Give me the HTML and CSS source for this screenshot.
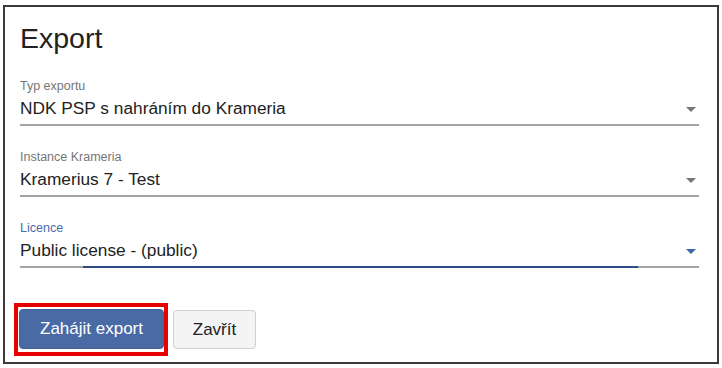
FILE: index.html
```html
<!DOCTYPE html>
<html>

<head>
    <title>Export</title>
    <link rel="stylesheet" href="styles.css">
</head>

<body>
    <div class="dialog">
        <h1 class="titulek">Export</h1>

        <div class="pole">
            <label class="popisek">Typ exportu</label>
            <div class="hodnota">
                <span class="text">NDK PSP s nahráním do Krameria</span>
                <svg class="sipka" width="10" height="5" viewBox="0 0 10 5"><path d="M0 0h10L5 5z"/></svg>
            </div>
        </div>

        <div class="pole">
            <label class="popisek">Instance Krameria</label>
            <div class="hodnota">
                <span class="text">Kramerius 7 - Test</span>
                <svg class="sipka" width="10" height="5" viewBox="0 0 10 5"><path d="M0 0h10L5 5z"/></svg>
            </div>
        </div>

        <div class="pole aktivni">
            <label class="popisek">Licence</label>
            <div class="hodnota">
                <span class="text">Public license - (public)</span>
                <svg class="sipka" width="10" height="5" viewBox="0 0 10 5"><path d="M0 0h10L5 5z"/></svg>
            </div>
            <div class="linka"></div>
        </div>

        <div class="akce">
            <div class="zvyrazneni">
                <button class="tlacitko hlavni">Zahájit export</button>
            </div>
            <button class="tlacitko zavrit">Zavřít</button>
        </div>
    </div>
</body>

</html>
```

FILE: styles.css
```css
body {
    margin: 0;
    background: #fff;
    font-family: "Liberation Sans", Arial, sans-serif;
    color: #222;
}

.dialog {
    box-sizing: border-box;
    margin: 5px 0 0 3px;
    width: 716px;
    height: 359px;
    border: 2px solid #3a3a3a;
    padding: 15px 18px 0 15px;
    display: flex;
    flex-direction: column;
}

.titulek {
    margin: 0;
    font-size: 28.5px;
    line-height: 33px;
    font-weight: normal;
    color: #222;
}

.pole {
    position: relative;
    margin-top: 24px;
    display: flex;
    flex-direction: column;
    border-bottom: 2px solid #a4a4a4;
    padding-bottom: 6px;
}

.popisek {
    font-size: 12.5px;
    line-height: 15px;
    color: #767676;
}

.hodnota {
    margin-top: 4px;
    display: flex;
    align-items: center;
    font-size: 17.3px;
    line-height: 20px;
}

.text {
    flex: 1;
}

.sipka {
    margin-right: 3px;
    margin-top: 2px;
    fill: #757575;
}

.aktivni .popisek {
    color: #4a6aa8;
}

.aktivni .sipka {
    fill: #3f63a8;
}

.linka {
    position: absolute;
    left: 63px;
    right: 61px;
    bottom: -2px;
    height: 2px;
    background: #2f4d85;
}

.akce {
    margin-top: 35px;
    margin-left: -6px;
    display: flex;
    align-items: flex-start;
}

.zvyrazneni {
    border: 4px solid #e60000;
    padding: 2px 0 3px 1px;
}

.tlacitko {
    font-family: "Liberation Sans", Arial, sans-serif;
    font-size: 17px;
    border-radius: 4px;
    cursor: pointer;
}

.hlavni {
    width: 145px;
    height: 40px;
    background: #4a6aa6;
    border: 1px solid #42609a;
    color: #fff;
}

.zavrit {
    margin-left: 5px;
    margin-top: 7px;
    width: 83px;
    height: 39px;
    background: #f4f4f4;
    border: 1px solid #cfcfcf;
    color: #222;
}
```
